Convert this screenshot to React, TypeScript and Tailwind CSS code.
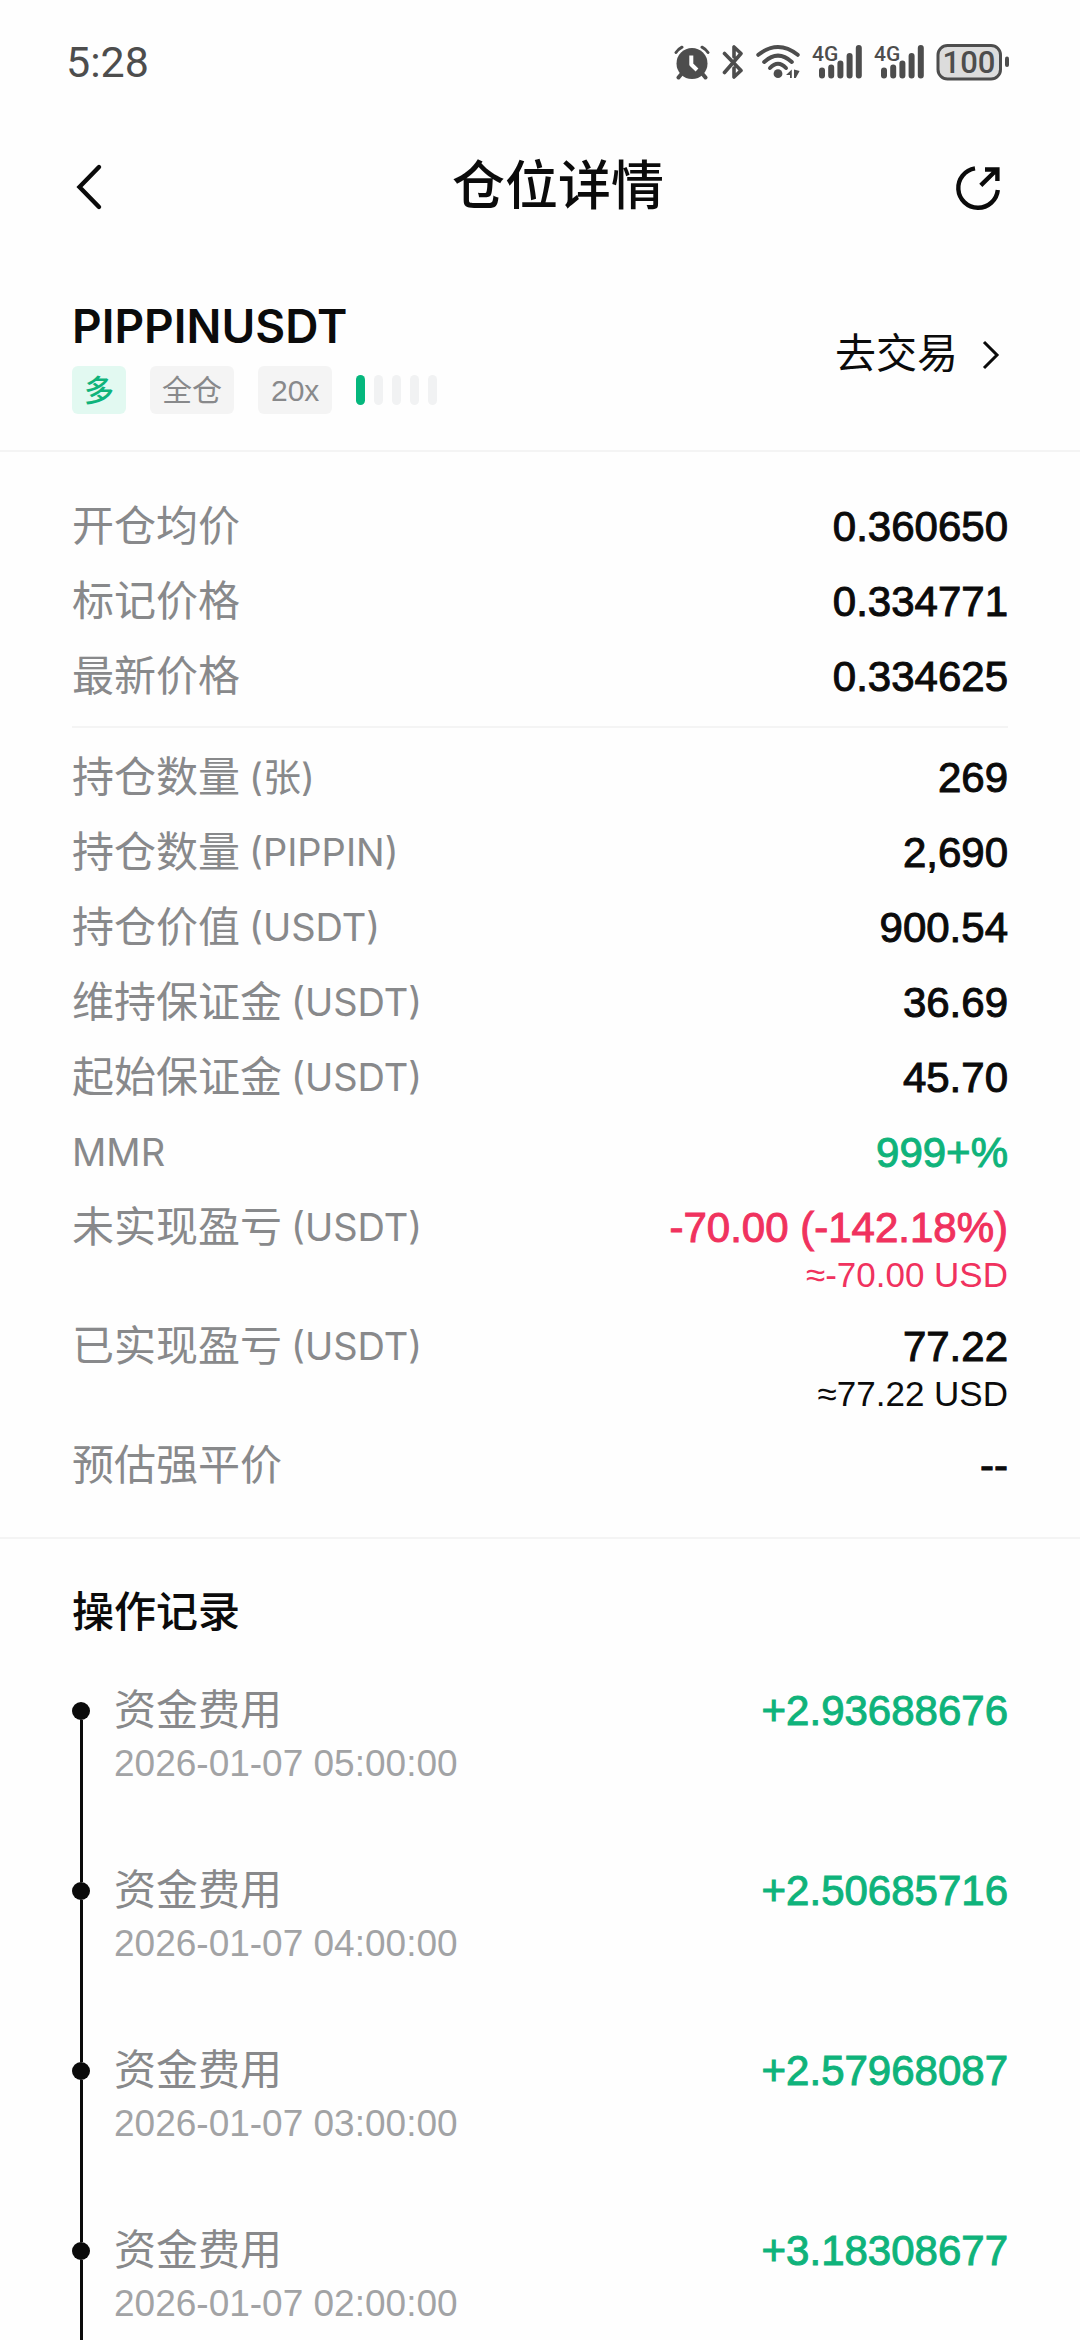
import React from 'react';

type Tone = 'default' | 'up' | 'down';

interface Detail {
    name: string;
    unit?: string;
    value: string;
    approx?: string;
    tone?: Tone;
}

const priceDetails: Detail[] = [
    { name: '开仓均价', value: '0.360650' },
    { name: '标记价格', value: '0.334771' },
    { name: '最新价格', value: '0.334625' },
];

const positionDetails: Detail[] = [
    { name: '持仓数量', unit: '(张)', value: '269' },
    { name: '持仓数量', unit: '(PIPPIN)', value: '2,690' },
    { name: '持仓价值', unit: '(USDT)', value: '900.54' },
    { name: '维持保证金', unit: '(USDT)', value: '36.69' },
    { name: '起始保证金', unit: '(USDT)', value: '45.70' },
    { name: '', unit: 'MMR', value: '999+%', tone: 'up' },
    { name: '未实现盈亏', unit: '(USDT)', value: '-70.00 (-142.18%)', approx: '≈-70.00 USD', tone: 'down' },
    { name: '已实现盈亏', unit: '(USDT)', value: '77.22', approx: '≈77.22 USD' },
    { name: '预估强平价', value: '--' },
];

const records = [
    { title: '资金费用', time: '2026-01-07 05:00:00', amount: '+2.93688676' },
    { title: '资金费用', time: '2026-01-07 04:00:00', amount: '+2.50685716' },
    { title: '资金费用', time: '2026-01-07 03:00:00', amount: '+2.57968087' },
    { title: '资金费用', time: '2026-01-07 02:00:00', amount: '+3.18308677' },
];

const toneClass: Record<Tone, string> = {
    default: 'text-[#0b0b0b]',
    up: 'text-[#0fb37b]',
    down: 'text-[#f0325e]',
};

const AlarmIcon = () => (
    <svg width="36" height="36" viewBox="0 0 36 36" fill="none" stroke="currentColor" strokeWidth="4" strokeLinecap="round">
        <circle cx="18" cy="19.5" r="15.5" fill="currentColor" stroke="none" />
        <path d="M2 8.5 Q4.5 5 8 3.2 M28 3.2 Q31.5 5 34 8.5" strokeWidth="3" />
        <path d="M7 30.5 L4.5 33.5 M29 30.5 L31.5 33.5" />
        <path d="M17.3 11.5 V20.5 L23 26" stroke="#fff" strokeLinecap="butt" strokeLinejoin="round" />
    </svg>
);

const BluetoothIcon = () => (
    <svg width="22" height="36" viewBox="0 0 22 36" fill="none" stroke="currentColor" strokeWidth="3.6" strokeLinecap="round" strokeLinejoin="round">
        <path d="M2.5 9.5 L19 26.5 L12 33 V24 M2.5 28.5 L19 9.5 L12 3 V13" />
    </svg>
);

const WifiIcon = () => (
    <svg width="44" height="36" viewBox="0 0 44 36" fill="none" stroke="currentColor" strokeWidth="4" strokeLinecap="round">
        <path d="M2.3 10.8 Q22 -4.8 41.7 10.8" />
        <path d="M8.2 18 Q22 5.4 35.8 18" />
        <path d="M14 24 Q22 15.5 30 24" />
        <circle cx="22" cy="29.7" r="4.4" fill="currentColor" stroke="none" />
        <path d="M35.8 25.5 V34 H34 V31 H30 Z M38 25.5 L43.6 27 L39.8 34 H38 Z" fill="currentColor" stroke="none" />
    </svg>
);

const SignalIcon = () => (
    <svg width="50" height="36" viewBox="0 0 50 36" fill="none" stroke="currentColor" strokeWidth="6" strokeLinecap="round" className="overflow-visible">
        <path d="M10 26.5 V31.5 M19.2 23.5 V31.5 M28.4 19.5 V31.5 M37.6 12 V31.5 M46.8 4 V31.5" />
        <text x="0" y="17" className="font-[Roboto] text-[21px] font-medium" fill="currentColor" stroke="none">4G</text>
    </svg>
);

const BatteryIcon = () => (
    <svg width="73" height="37" viewBox="0 0 73 37" fill="none">
        <rect x="2" y="1.5" width="62.5" height="33.5" rx="9.5" fill="#dcdcdc" stroke="currentColor" strokeWidth="3" />
        <path d="M71 14.5 V21" stroke="currentColor" strokeWidth="4" strokeLinecap="round" />
        <text x="33" y="29" textAnchor="middle" className="font-[Roboto] text-[31px] font-medium" fill="currentColor">100</text>
    </svg>
);

const StatusBar = () => (
    <div className="flex h-[124px] items-center justify-between pl-[66px] pr-[71px] text-[#4d4d4d]">
        <span className="font-[Roboto] text-[43px]">5:28</span>
        <div className="flex items-center gap-3">
            <AlarmIcon />
            <BluetoothIcon />
            <WifiIcon />
            <SignalIcon />
            <SignalIcon />
            <BatteryIcon />
        </div>
    </div>
);

const NavBar = () => (
    <header className="flex h-[126px] items-center px-[72px]">
        <button type="button" aria-label="返回" className="w-[90px]">
            <svg width="36" height="48" viewBox="0 0 36 48" fill="none" stroke="currentColor" strokeWidth="4.4">
                <path d="M27 4 L7.5 24 L27 44" strokeLinecap="round" />
            </svg>
        </button>
        <h1 className="flex-1 text-center text-[53px] font-medium">仓位详情</h1>
        <button type="button" aria-label="分享" className="w-[54px]">
            <svg width="48" height="48" viewBox="0 0 48 48" fill="none" stroke="currentColor" strokeWidth="4.4">
                <path d="M21 5.4 A19.8 19.8 0 1 0 43.8 27" />
                <path d="M26.8 22.4 L42.5 7 M31 6.5 H43.4 V18" />
            </svg>
        </button>
    </header>
);

const Tag: React.FC<{ className: string; children: React.ReactNode }> = ({ className, children }) => (
    <span className={`mr-6 flex h-12 items-center rounded-md text-[30px] ${className}`}>{children}</span>
);

const DetailRow: React.FC<{ detail: Detail }> = ({ detail }) => {
    const tone = toneClass[detail.tone ?? 'default'];

    return (
        <div className="flex justify-between">
            <dt className="flex gap-[9px] text-[42px] leading-[51px] text-[#88898b]">
                {detail.name && <span>{detail.name}</span>}
                {detail.unit && (
                    <span className="font-['Inter','Noto_Sans_CJK_SC',sans-serif] text-[38px]">{detail.unit}</span>
                )}
            </dt>
            <dd className={`text-right ${tone}`}>
                <div className="text-[42px] leading-[51px] [-webkit-text-stroke:1px]">{detail.value}</div>
                {detail.approx && <div className="text-[35px] leading-[44px]">{detail.approx}</div>}
            </dd>
        </div>
    );
};

const App: React.FC = () => {
    return (
        <div
            lang="zh-CN"
            className="h-screen overflow-hidden bg-[#fefefe] font-['Liberation_Sans','Noto_Sans_CJK_SC',sans-serif] text-[#0b0b0b]"
        >
            <StatusBar />
            <NavBar />

            <section className="flex items-center justify-between border-b-2 border-[#f4f4f4] px-[72px] pt-[46px] pb-9">
                <div>
                    <h2 className="mb-[10px] font-[Inter] text-[46px] leading-[60px] font-semibold">PIPPINUSDT</h2>
                    <div className="flex items-center">
                        <Tag className="bg-[#e2f9f1] px-3 font-medium text-[#0fb37b]">多</Tag>
                        <Tag className="bg-[#f4f4f4] px-3 text-[#88898b]">全仓</Tag>
                        <Tag className="bg-[#f4f4f4] px-[13px] text-[#88898b]">20x</Tag>
                        <div className="flex gap-[9px]">
                            {[1, 2, 3, 4, 5].map((level) => (
                                <span
                                    key={level}
                                    className={`h-[30px] w-[9px] rounded-full ${level === 1 ? 'bg-[#05b77d]' : 'bg-[#f1f2f3]'}`}
                                />
                            ))}
                        </div>
                    </div>
                </div>
                <button type="button" className="flex items-center gap-[14px] text-[41px]">
                    去交易
                    <svg width="36" height="36" viewBox="0 0 36 36" fill="none" stroke="currentColor" strokeWidth="3">
                        <path d="M12 5 L25 18 L12 31" />
                    </svg>
                </button>
            </section>

            <section className="border-b-2 border-[#f4f4f4] px-[72px] pt-[49px] pb-[46px]">
                <dl className="space-y-6">
                    {priceDetails.map((detail) => (
                        <DetailRow key={detail.name} detail={detail} />
                    ))}
                </dl>
                <hr className="my-6 border-t-2 border-[#f4f4f4]" />
                <dl className="space-y-6">
                    {positionDetails.map((detail, index) => (
                        <DetailRow key={index} detail={detail} />
                    ))}
                </dl>
            </section>

            <section className="px-[72px] pt-12">
                <h3 className="mb-[47px] text-[42px] leading-[51px] font-medium">操作记录</h3>
                <ol>
                    {records.map((record) => (
                        <li key={record.time} className="flex gap-6">
                            <div className="-mb-[17px] flex flex-col items-center pt-[17px]">
                                <span className="h-[18px] w-[18px] rounded-full bg-[#0b0b0b]" />
                                <span className="w-[3px] flex-1 bg-[#0b0b0b]" />
                            </div>
                            <div className="flex-1 pb-[73px]">
                                <p className="text-[42px] leading-[51px] text-[#88898b]">{record.title}</p>
                                <p className="text-[37px] leading-[56px] text-[#a2a3a5]">{record.time}</p>
                            </div>
                            <p className="text-[42px] leading-[51px] text-[#0fb37b] [-webkit-text-stroke:1px]">{record.amount}</p>
                        </li>
                    ))}
                </ol>
            </section>
        </div>
    );
};

export default App;
